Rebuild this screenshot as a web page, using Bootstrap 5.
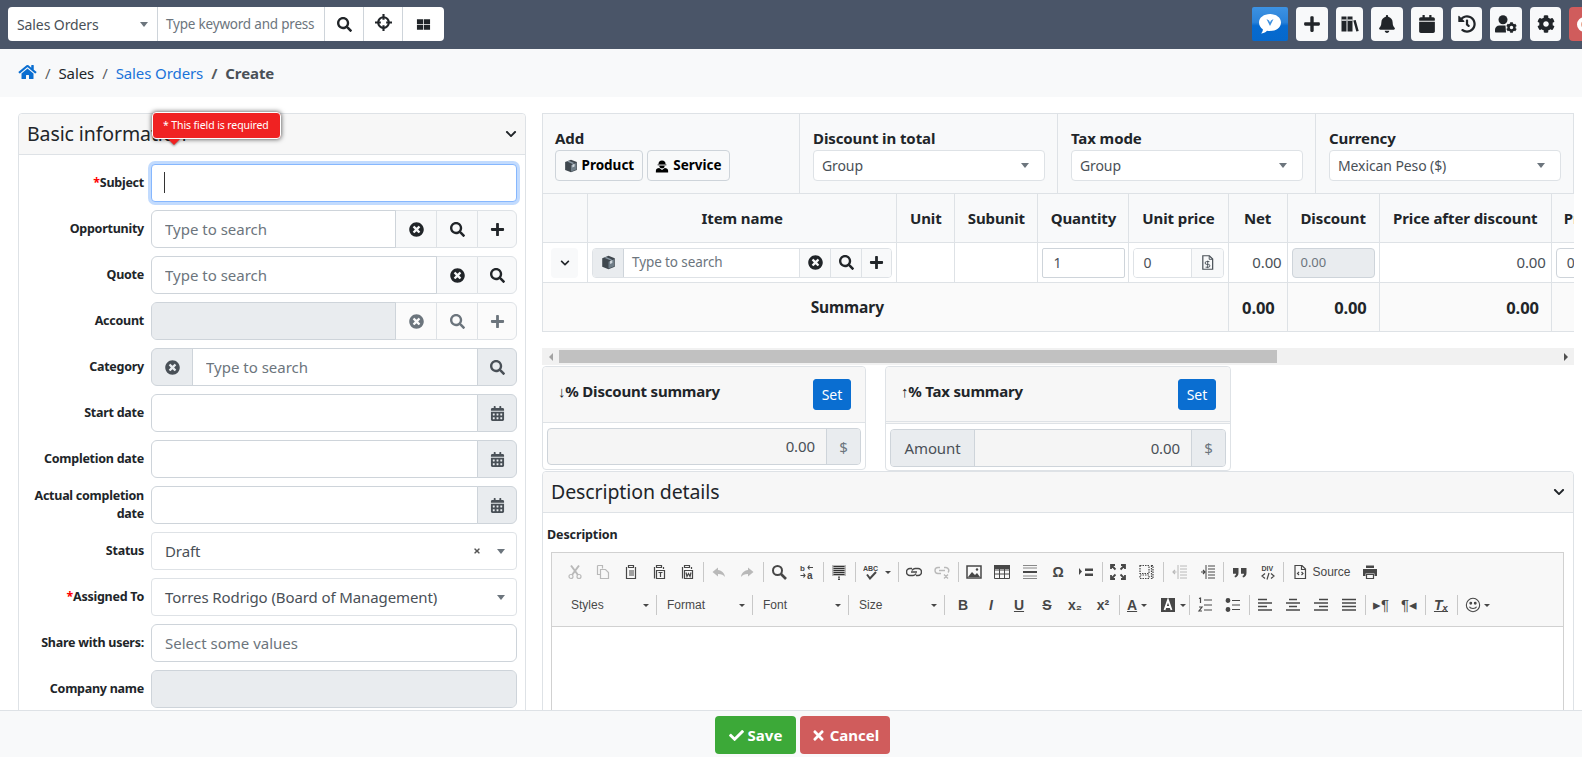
<!DOCTYPE html>
<html lang="en"><head><meta charset="utf-8"><title>Sales Orders - Create</title>
<link href="https://cdn.jsdelivr.net/npm/bootstrap@5.3.0/dist/css/bootstrap.min.css" rel="stylesheet">
<style>
html,body{height:757px;overflow:hidden;background:#fff}
body{font-family:"Noto Sans","Open Sans",sans-serif;font-size:15px;color:#212529;letter-spacing:-.1px}
.fa{width:1em;height:1em;fill:currentColor;display:inline-block;flex:none}
.sym{display:none}
.topbar{height:49px;background:#4a5568;padding:7px 0 0 8px;overflow:hidden;gap:8px}
.searchbox{width:436px;height:34px;background:#fff;border-radius:4px;font-size:14px;color:#495057;overflow:hidden}
.sb-sel{width:150px;border-right:1px solid #ced4da;padding:0 9px}
.sb-inp{width:167px;border-right:1px solid #ced4da;padding:0 8px;color:#6c757d;white-space:nowrap;overflow:hidden;font-size:13.5px;letter-spacing:-.2px}
.sb-btn{width:39px;border-right:1px solid #ced4da;font-size:15px;color:#212529}
.sb-btn:last-child{border:0;width:41px}
.sb-btn .fa.cross{width:17px;height:17px;margin-top:-3px}
.caret{width:0;height:0;border:4px solid transparent;border-top:5px solid #6c757d;border-bottom:0;flex:none}
.tools{margin-right:-20px;gap:8px}
.tb{height:34px;width:32px;background:#f8f9fa;border-radius:4px;font-size:18px;color:#212529}
.tb.w27{width:27px}.tb.w31{width:31px}
.tb .fa.ucog{width:22px}
.tb.chat{width:36px;background:linear-gradient(#3d92e2 0,#2a82d9 45%,#066ad0 55%,#0568cc 100%);border-radius:2px}
.tb.chat svg{width:24px;height:22px}
.tb.red{background:#d05c5c;width:33px;justify-content:flex-start!important;padding-left:8px}
.redring{width:15px;height:15px;border-radius:50%;border:4px solid #fff;flex:none;background:#e9a58f}
.crumbs{height:48px;background:#f8f9fa;padding:0 18px;font-size:15px}
.crumbs .breadcrumb{margin:0;--bs-breadcrumb-item-padding-x:8px}
.crumbs a{text-decoration:none;color:#1a73d9}
.crumbs .breadcrumb-item.active{font-weight:700;color:#495057}
.crumbs .fa{width:19px;height:16px;color:#0a6ed1;vertical-align:-1px}
.pagebody{padding:16px 8px 0 18px;gap:16px}
.leftcol{width:508px;flex:none;position:relative}
.rightcol{width:1032px;flex:none}
.panel{border:1px solid #dee2e6;border-radius:4px;background:#fff}
.panel-h{height:41px;background:#f7f7f7;border-bottom:1px solid #dee2e6;padding:0 8px;font-size:19.5px;border-radius:4px 4px 0 0}
.panel-h .fa{font-size:12px}
.formbody{padding:9px 8px 0 0}
.frow{height:38px;margin-bottom:8px;gap:7px}
.flabel{width:125px;flex:none;text-align:right;font-weight:700;font-size:12.5px;line-height:18px;letter-spacing:-.25px}
.req{color:#f00}
.fctl{width:366px;flex:none;position:relative}
.fctl .form-control,.fctl .input-group-text{height:38px;font-size:15px;border-color:#ced4da}
.fctl .form-control{padding-left:13px;color:#495057}
.form-control::placeholder{color:#6c757d}
.igbtn{width:42px;justify-content:center;background:#f8f9fa;font-size:16px;color:#212529;padding:0;border-color:#dee2e6!important}
.igbtn:last-child{width:40px}
.igbtn.off{color:#6c757d;background:#fbfbfb}
.igbtn.grey{background:#e9ecef;color:#495057;border-color:#ced4da!important}
.fsel{height:38px;border:1px solid #dee2e6;border-radius:4px;background:#fff;color:#495057;padding:0 11px 0 13px;font-size:15px}
.fsel .fa{font-size:8px;color:#555}
.focusfield{border:1px solid #86b7fe;border-radius:4px;height:38px;box-shadow:0 0 0 3px rgba(13,110,253,.25);background:#fff}
.cursor{position:absolute;left:13px;top:8px;height:21px;width:1px;background:#333}
.reqtip{position:absolute;left:134px;top:-1px;width:129px;height:27px;background:#f02222;border:1px solid #fff;border-radius:4px;box-shadow:0 0 5px rgba(0,0,0,.75);color:#fff;font-size:10.5px;z-index:5;padding-left:10px;letter-spacing:-.1px;white-space:nowrap}
.reqtip::after{content:"";position:absolute;left:15px;bottom:-7px;border:6px solid transparent;border-top:6px solid #f02222;border-bottom:0;filter:drop-shadow(0 1px 1px rgba(0,0,0,.5))}
.topcfg{height:80px;background:#f8f9fa;border:1px solid #dee2e6;border-bottom:0}
.cfgcell{flex:1 1 0;padding:13px 12px 0 13px;border-right:1px solid #dee2e6;font-weight:700;font-size:15px;line-height:23px}
.cfgcell:first-child{padding-left:12px}
.cfgcell:last-child{border-right:0}
.cfgbtn{height:31px;border:1px solid #ced4da;border-radius:4px;background:#f8f9fa;font-size:13.5px;font-weight:700;padding:0 7.5px;gap:4px;line-height:1}
.cfgbtn .fa{font-size:14px}
.cfgsel{height:31px;background:#fff;border:1px solid #dee2e6;border-radius:4px;font-weight:400;font-size:14px;color:#495057;padding:0 15px 0 8px}
.tablewrap{overflow:hidden}
.itemtable{table-layout:fixed;width:1110px;margin:0;border-collapse:collapse;font-size:15px}
.itemtable th,.itemtable td{border:1px solid #dee2e6;padding:0;vertical-align:middle}
.itemtable thead th{height:49px;background:#f8f9fa;text-align:center;font-weight:700;font-size:15px;white-space:nowrap;overflow:hidden}
.itemtable thead th.lastcol{text-align:left;padding-left:12px}
.itemtable tbody td{height:40px}
.itemtable tfoot td{height:49px;background:#fafafa;font-weight:700;font-size:16.5px;text-align:right;padding:2px 12px 0 0}
.itemtable tfoot td.sumlabel{text-align:center;padding-right:76px;font-size:15.5px}
.c1{width:45px}.c2{width:309px}.c3{width:58px}.c4{width:83px}.c5{width:91px}.c6{width:99px}.c7{width:59px}.c8{width:92px}.c9{width:172px}.c10{width:100px}
.expander{width:27px;height:30px;background:#f8f9fa;border-radius:4px;margin-left:8px;font-size:10px}
.minig{height:30px;border:1px solid #dee2e6;border-radius:4px;margin:0 4px;overflow:hidden;font-size:13.5px;background:#fff}
.minig>span{border-right:1px solid #dee2e6;width:31px;background:#f8f9fa;font-size:15px;flex:none}
.minig>span:last-child{border-right:0;width:29px}
.minig>span.boxic{background:#e9ecef;border-color:#ced4da}
.minig .mi{flex:1 1 0;padding-left:8px;color:#6c757d;border-right:1px solid #dee2e6}
.numbox{height:30px;border:1px solid #ced4da;border-radius:4px;background:#fff;margin:0 4px;font-size:14px;color:#495057;padding-left:10px}
.numbox.sq{border-radius:2px;margin:0 3px 0 4px;padding-left:10px}
.pricebox{height:30px;margin:0 4px;border:1px solid #dee2e6;border-radius:4px;font-size:14px;color:#495057;overflow:hidden}
.pricebox>b{flex:1 1 0;font-weight:400;padding-left:9px;background:#fff;border-right:1px solid #dee2e6;line-height:28px}
.pricebox>span{width:31px;background:#f8f9fa;font-size:15px}
.discbox{height:30px;margin:0 4px;background:#e9ecef;border:1px solid #ced4da;border-radius:4px;font-size:13px;color:#6c757d;padding-left:8px}
.numcell{text-align:right;padding-right:5px!important;font-size:15px;color:#495057}
.hscroll{height:17px;margin-top:16px;background:#f1f1f1;padding:2px 0}
.hthumb{width:718px;background:#c1c1c1}
.harrow{width:17px}
.tri-l,.tri-r{width:0;height:0;border:4px solid transparent}
.tri-l{border-right:4px solid #a3a3a3;border-left:0}
.tri-r{border-left:4px solid #505050;border-right:0}
.sumrow{gap:19px;align-items:flex-start;margin-top:1px}
.sumcard{border:1px solid #dee2e6;border-radius:4px;background:#fff;width:324px;height:104px}
.sumcard.tax{width:346px;height:105px}
.sumhead{height:56px;background:#f7f7f7;border-bottom:1px solid #dee2e6;padding:0 14px 0 15px;font-weight:700;font-size:15px;border-radius:4px 4px 0 0}
.sumcard.tax .sumhead{border-bottom:3px double #dee2e6;height:57px}
.sumhead>span{margin-top:-6px;letter-spacing:-.2px}
.setbtn{width:38px;height:31px;background:#0a6ed1;border-color:#0a6ed1;border-radius:3px;font-size:14px;padding:0;color:#fff}
.sumgrp{height:37px;margin:5px 4px 0;border:1px solid #ced4da;border-radius:4px;background:#f5f5f5;font-size:15px;color:#495057;overflow:hidden}
.sumcard.tax .sumgrp{height:38px}
.sumgrp .val{flex:1 1 0;text-align:right;padding-right:11px}
.sumgrp .add{background:#e9ecef;border-left:1px solid #ced4da;width:34px;text-align:center;line-height:36px;color:#6c757d}
.sumgrp .pre{background:#e9ecef;border-right:1px solid #ced4da;width:84px;text-align:center;line-height:36px}
.desccard{height:300px}
.desccard .panel-h{padding:0 8px}
.desclabel{font-weight:700;font-size:12.5px;line-height:16px;padding:14px 0 9px 4px}
.cke{margin:0 9px 0 8px;border:1px solid #d1d1d1;height:200px;font-family:"Liberation Sans",sans-serif;letter-spacing:0}
.cketb{background:#f8f8f8;border-bottom:1px solid #d1d1d1;height:74px;padding:5px 0 0 9px}
.ckrow{height:28px;margin-bottom:5px;color:#474747}
.kb{width:28px;height:28px;flex:none}
.kb svg{width:16px;height:16px;fill:none;stroke:currentColor;stroke-width:1.2}
.kb svg text{stroke:none;fill:currentColor;font-family:"Liberation Sans",sans-serif;font-weight:700}
.kb.off{opacity:.35}
.kb.wide{width:39px;justify-content:flex-start!important;padding-left:6px;gap:6px}
.kb.a{width:33px;justify-content:flex-start!important;padding-left:6px;gap:4px}
.kb.sm{width:32px;justify-content:flex-start!important;padding-left:6px;gap:3px}
.kb.src{width:70px;justify-content:flex-start!important;padding-left:6px;gap:5px;font-size:12px}
.kcaret{width:0;height:0;border:3px solid transparent;border-top:3px solid #474747;border-bottom:0;flex:none}
.ksep{width:1px;height:20px;background:#c8c8c8;margin:0 1.5px;flex:none}
.ksep.m3{margin-left:3px}
.kcombo{width:96px;height:20px;border-right:1px solid #c8c8c8;padding:0 7px 0 2px;font-size:12px;color:#484848;flex:none}
.ktxt{font-weight:700;font-size:14px}
.savebar{height:47px;background:#f8f9fa;border-top:1px solid #dee2e6;padding:5px 0 0 23px;gap:4px;z-index:10}
.actbtn{height:38px;color:#fff;font-weight:700;font-size:15px;border-radius:4px;border:0;padding:0;gap:4px}
.actbtn .fa{font-size:15px}
.act-save{width:81px;background:#3ca938}
.act-cancel{width:90px;background:#d05c5c}
.act-save:hover{background:#3ca938;color:#fff}.act-cancel:hover{background:#d05c5c;color:#fff}
</style></head>
<body>
<svg class="sym" aria-hidden="true">
<symbol id="i-search" viewBox="0 0 512 512"><path d="M505 442.7L405.3 343c-4.5-4.5-10.6-7-17-7H372c27.6-35.3 44-79.7 44-128C416 93.1 322.9 0 208 0S0 93.1 0 208s93.1 208 208 208c48.3 0 92.7-16.4 128-44v16.3c0 6.4 2.5 12.5 7 17l99.7 99.7c9.4 9.4 24.6 9.4 33.9 0l28.3-28.3c9.4-9.4 9.4-24.6.1-34zM208 336c-70.7 0-128-57.2-128-128 0-70.7 57.2-128 128-128 70.7 0 128 57.2 128 128 0 70.7-57.2 128-128 128z"/></symbol>
<symbol id="i-plus" viewBox="0 0 448 512"><path d="M416 208H272V64c0-17.67-14.33-32-32-32h-32c-17.67 0-32 14.33-32 32v144H32c-17.67 0-32 14.33-32 32v32c0 17.67 14.33 32 32 32h144v144c0 17.67 14.33 32 32 32h32c17.67 0 32-14.33 32-32V304h144c17.67 0 32-14.33 32-32v-32c0-17.67-14.33-32-32-32z"/></symbol>
<symbol id="i-xc" viewBox="0 0 512 512"><path d="M256 8C119 8 8 119 8 256s111 248 248 248 248-111 248-248S393 8 256 8zm121.6 313.1c4.7 4.7 4.7 12.3 0 17L338 377.6c-4.7 4.7-12.3 4.7-17 0L256 312l-65.1 65.6c-4.7 4.7-12.3 4.7-17 0L134.4 338c-4.7-4.7-4.7-12.3 0-17l65.6-65-65.6-65.1c-4.7-4.7-4.7-12.3 0-17l39.6-39.6c4.7-4.7 12.3-4.7 17 0l65 65.7 65.1-65.6c4.7-4.7 12.3-4.7 17 0l39.6 39.6c4.7 4.7 4.7 12.3 0 17L312 256l65.6 65.1z"/></symbol>
<symbol id="i-calalt" viewBox="0 0 448 512"><path d="M0 464c0 26.5 21.5 48 48 48h352c26.5 0 48-21.5 48-48V192H0v272zm320-196c0-6.6 5.4-12 12-12h40c6.6 0 12 5.4 12 12v40c0 6.6-5.4 12-12 12h-40c-6.6 0-12-5.4-12-12v-40zm0 128c0-6.6 5.4-12 12-12h40c6.6 0 12 5.4 12 12v40c0 6.6-5.4 12-12 12h-40c-6.6 0-12-5.4-12-12v-40zM192 268c0-6.6 5.4-12 12-12h40c6.6 0 12 5.4 12 12v40c0 6.6-5.4 12-12 12h-40c-6.6 0-12-5.4-12-12v-40zm0 128c0-6.6 5.4-12 12-12h40c6.6 0 12 5.4 12 12v40c0 6.6-5.4 12-12 12h-40c-6.6 0-12-5.4-12-12v-40zM64 268c0-6.6 5.4-12 12-12h40c6.6 0 12 5.4 12 12v40c0 6.6-5.4 12-12 12H76c-6.6 0-12-5.4-12-12v-40zm0 128c0-6.6 5.4-12 12-12h40c6.6 0 12 5.4 12 12v40c0 6.6-5.4 12-12 12H76c-6.6 0-12-5.4-12-12v-40zM400 64h-48V16c0-8.8-7.2-16-16-16h-32c-8.8 0-16 7.2-16 16v48H160V16c0-8.8-7.2-16-16-16h-32c-8.8 0-16 7.2-16 16v48H48C21.5 64 0 85.5 0 112v48h448v-48c0-26.5-21.5-48-48-48z"/></symbol>
<symbol id="i-cal" viewBox="0 0 448 512"><path d="M12 192h424c6.6 0 12 5.4 12 12v260c0 26.5-21.5 48-48 48H48c-26.5 0-48-21.5-48-48V204c0-6.6 5.4-12 12-12zm436-44v-36c0-26.5-21.5-48-48-48h-48V12c0-6.6-5.4-12-12-12h-40c-6.6 0-12 5.4-12 12v52H160V12c0-6.6-5.4-12-12-12h-40c-6.6 0-12 5.4-12 12v52H48C21.5 64 0 85.5 0 112v36c0 6.6 5.4 12 12 12h424c6.6 0 12-5.4 12-12z"/></symbol>
<symbol id="i-bell" viewBox="0 0 448 512"><path d="M224 512c35.32 0 63.97-28.65 63.97-64H160.03c0 35.35 28.65 64 63.97 64zm215.39-149.71c-19.32-20.76-55.47-51.99-55.47-154.29 0-77.7-54.48-139.9-127.94-155.16V32c0-17.67-14.32-32-31.98-32s-31.98 14.33-31.98 32v20.84C118.56 68.1 64.08 130.3 64.08 208c0 102.3-36.15 133.53-55.47 154.29-6 6.45-8.66 14.16-8.61 21.71.11 16.4 12.98 32 32.1 32h383.8c19.12 0 32-15.6 32.1-32 .05-7.55-2.61-15.27-8.61-21.71z"/></symbol>
<symbol id="i-hist" viewBox="0 0 512 512"><path d="M504 255.531c.253 136.64-111.18 248.372-247.82 248.468-59.015.042-113.223-20.53-155.822-54.911-11.077-8.94-11.905-25.541-1.839-35.607l11.267-11.267c8.609-8.609 22.353-9.551 31.891-1.984C173.062 425.135 212.781 440 256 440c101.705 0 184-82.311 184-184 0-101.705-82.311-184-184-184-48.814 0-93.149 18.969-126.068 49.932l50.754 50.754c10.08 10.08 2.941 27.314-11.313 27.314H24c-8.837 0-16-7.163-16-16V38.627c0-14.254 17.234-21.393 27.314-11.314l49.372 49.372C129.209 34.136 189.552 8 256 8c136.81 0 247.747 110.78 248 247.531zm-180.912 78.784l9.823-12.63c8.138-10.463 6.253-25.542-4.21-33.679L288 256.349V152c0-13.255-10.745-24-24-24h-16c-13.255 0-24 10.745-24 24v135.651l65.409 50.874c10.463 8.137 25.541 6.253 33.679-4.21z"/></symbol>
<symbol id="i-cog" viewBox="0 0 512 512"><path d="M487.4 315.7l-42.6-24.6c4.3-23.2 4.3-47 0-70.2l42.6-24.6c4.9-2.8 7.1-8.6 5.5-14-11.1-35.6-30-67.8-54.7-94.6-3.8-4.1-10-5.1-14.8-2.3L380.8 110c-17.9-15.4-38.5-27.3-60.8-35.1V25.8c0-5.6-3.9-10.5-9.4-11.7-36.7-8.2-74.3-7.8-109.2 0-5.5 1.2-9.4 6.1-9.4 11.7V75c-22.2 7.9-42.8 19.8-60.8 35.1L88.7 85.5c-4.9-2.8-11-1.9-14.8 2.3-24.7 26.7-43.6 58.9-54.7 94.6-1.7 5.4.6 11.2 5.5 14L67.3 221c-4.3 23.2-4.3 47 0 70.2l-42.6 24.6c-4.9 2.8-7.1 8.6-5.5 14 11.1 35.6 30 67.8 54.7 94.6 3.8 4.1 10 5.1 14.8 2.3l42.6-24.6c17.9 15.4 38.5 27.3 60.8 35.1v49.2c0 5.6 3.9 10.5 9.4 11.7 36.7 8.2 74.3 7.8 109.2 0 5.5-1.2 9.4-6.1 9.4-11.7v-49.2c22.2-7.9 42.8-19.8 60.8-35.1l42.6 24.6c4.9 2.8 11 1.9 14.8-2.3 24.7-26.7 43.6-58.9 54.7-94.6 1.5-5.5-.7-11.3-5.6-14.1zM256 336c-44.1 0-80-35.9-80-80s35.9-80 80-80 80 35.9 80 80-35.9 80-80 80z"/></symbol>
<symbol id="i-home" viewBox="0 0 576 512"><path d="M280.37 148.26L96 300.11V464a16 16 0 0 0 16 16l112.06-.29a16 16 0 0 0 15.92-16V368a16 16 0 0 1 16-16h64a16 16 0 0 1 16 16v95.64a16 16 0 0 0 16 16.05L464 480a16 16 0 0 0 16-16V300L295.67 148.26a12.19 12.19 0 0 0-15.3 0zM571.6 251.47L488 182.56V44.05a12 12 0 0 0-12-12h-56a12 12 0 0 0-12 12v72.61L318.47 43a48 48 0 0 0-61 0L4.34 251.47a12 12 0 0 0-1.6 16.9l25.5 31A12 12 0 0 0 45.15 301l235.22-193.74a12.19 12.19 0 0 1 15.3 0L530.9 301a12 12 0 0 0 16.9-1.6l25.5-31a12 12 0 0 0-1.7-16.93z"/></symbol>
<symbol id="i-check" viewBox="0 0 512 512"><path d="M173.898 439.404l-166.4-166.4c-9.997-9.997-9.997-26.206 0-36.204l36.203-36.204c9.997-9.998 26.207-9.998 36.204 0L192 312.69 432.095 72.596c9.997-9.997 26.207-9.997 36.204 0l36.203 36.204c9.997 9.997 9.997 26.206 0 36.204l-294.4 294.401c-9.998 9.997-26.207 9.997-36.204-.001z"/></symbol>
<symbol id="i-times" viewBox="0 0 352 512"><path d="M242.72 256l100.07-100.07c12.28-12.28 12.28-32.19 0-44.48l-22.24-22.24c-12.28-12.28-32.19-12.28-44.48 0L176 189.28 75.93 89.21c-12.28-12.28-32.19-12.28-44.48 0L9.21 111.45c-12.28 12.28-12.28 32.19 0 44.48L109.28 256 9.21 356.07c-12.28 12.28-12.28 32.19 0 44.48l22.24 22.24c12.28 12.28 32.2 12.28 44.48 0L176 322.72l100.07 100.07c12.28 12.28 32.2 12.28 44.48 0l22.24-22.24c12.28-12.28 12.28-32.19 0-44.48L242.72 256z"/></symbol>
<symbol id="i-chev" viewBox="0 0 448 512"><path d="M207.029 381.476L12.686 187.132c-9.373-9.373-9.373-24.569 0-33.941l22.667-22.667c9.357-9.357 24.522-9.375 33.901-.04L224 284.505l154.745-154.021c9.379-9.335 24.544-9.317 33.901.04l22.667 22.667c9.373 9.373 9.373 24.569 0 33.941L240.971 381.476c-9.373 9.372-24.569 9.372-33.942 0z"/></symbol>
<symbol id="i-th" viewBox="0 0 16 16"><path d="M1 2.500h6.600v5.200H1zM8.400 2.500H15v5.200H8.400zM1 8.500h6.600v5.200H1zM8.400 8.500H15v5.200H8.400z"/></symbol>
<symbol id="i-cross" viewBox="0 0 16 16"><path d="M8 2A6 6 0 1 0 8 14A6 6 0 1 0 8 2zm0 2a4 4 0 1 1 0 8a4 4 0 1 1 0-8z" fill-rule="evenodd"/><path d="M7 0h2v5.500H7zM7 10.500h2V16H7zM0 7h5.500v2H0zM10.500 7H16v2h-5.500z"/></symbol>
<symbol id="i-books" viewBox="0 0 18 18"><path d="M.500 1.500h5v15h-5zM6.500 1.500h5v15h-5zM12.300 5.500l2.400-.6 3 11-2.400.6z"/><path d="M.500 4.500h5v1.200h-5zM6.500 4.500h5v1.200h-5z" fill="#f8f9fa"/></symbol>
<symbol id="i-ucog" viewBox="0 0 22 18"><circle cx="8" cy="4.800" r="4.500"/><path d="M1 17.500c-.6 0-1-.4-1-1v-1.700C0 12.300 2 10.500 4.500 10.500h6l.5 7z"/><use href="#i-cog" x="11" y="7" width="11" height="11"/></symbol>
<symbol id="i-box" viewBox="0 0 16 16"><path d="M8 .8L1.300 3.500v9L8 15.200l6.700-2.700v-9z" fill="#3f474e"/><path d="M8 7.200L14 4.500v7.600L8 14.500z" fill="#6f7d87"/><path d="M9.500 6.500l2.600-1.200v3.300l-2.600 1.100z" fill="#cfd6dc"/><path d="M5.500 2l6.300 2.700-2 .9L3.500 2.800z" fill="#8a98a3"/></symbol>
<symbol id="i-worker" viewBox="0 0 16 16"><path d="M4 5.800a4 4 0 0 1 8 0z"/><path d="M3 6.200h10v1H3z"/><path d="M5 7.600h6a3 3 0 0 1-6 0z"/><path d="M1 15.500v-2c0-2 1.700-3.200 3.800-3.200L8 12.600l3.200-2.300c2.100 0 3.800 1.200 3.800 3.200v2z"/></symbol>
<symbol id="i-fdollar" viewBox="0 0 14 16"><path d="M2 .8h7L12.500 4.300v10.900H2z" fill="none" stroke="currentColor" stroke-width="1.300"/><path d="M8.800 1v3.600h3.600" fill="none" stroke="currentColor"/><path d="M9 7H6a1 1 0 0 0 0 3h2a1 1 0 0 1 0 3H5M7.200 6v8" fill="none" stroke="currentColor"/></symbol>
<symbol id="k-cut" viewBox="0 0 16 16"><circle cx="4" cy="12.500" r="2"/><circle cx="12" cy="12.500" r="2"/><path d="M5 11L12 1.500M11 11L4 1.500" stroke-width="2"/></symbol>
<symbol id="k-copy" viewBox="0 0 16 16"><path d="M2.500 1.500h5v3M5.500 5.500h5l3 3v6h-8zM2.500 1.500v9h3"/></symbol>
<symbol id="k-paste" viewBox="0 0 16 16"><path d="M3.500 3v11.500h9V3M5.500 1.500h5v2h-5z"/><path d="M6 7h5M6 9h5M6 11h5"/></symbol>
<symbol id="k-pastet" viewBox="0 0 16 16"><path d="M3.500 3v11.500M12.500 3v2M5.500 1.500h5v2h-5zM5.500 6.500h8v8h-8z"/><path d="M7.500 8.500h4M9.500 8.500v4.500"/></symbol>
<symbol id="k-pastew" viewBox="0 0 16 16"><path d="M3.500 3v11.500M12.500 3v2M5.500 1.500h5v2h-5zM5.500 6.500h8v8h-8z"/><path d="M7 8.500l1 4 1.500-3 1.500 3 1-4"/></symbol>
<symbol id="k-undo" viewBox="0 0 16 16"><path d="M7 3.500L1.500 8 7 12.500V10c3.500 0 5.500 1 7 3-.5-4-3-6.500-7-7z" fill="currentColor" stroke="none"/></symbol>
<symbol id="k-redo" viewBox="0 0 16 16"><path d="M9 3.500L14.500 8 9 12.500V10c-3.500 0-5.500 1-7 3 .5-4 3-6.500 7-7z" fill="currentColor" stroke="none"/></symbol>
<symbol id="k-find" viewBox="0 0 16 16"><circle cx="6.500" cy="6.500" r="4.500" stroke-width="2"/><path d="M10 10l5 5" stroke-width="2.600"/></symbol>
<symbol id="k-all" viewBox="0 0 16 16"><path d="M1 1h14v11H1z" fill="#b9b9b9" stroke="none"/><path d="M2.500 2.500h11M2.500 4.500h11M2.500 6.500h11M2.500 8.500h11M2.500 10.500h11" stroke="#222" stroke-width=".9"/><path d="M7 13h2M8 13v2.500M7 15.500h2" stroke="#222" stroke-width=".8"/></symbol>
<symbol id="k-link" viewBox="0 0 16 16"><path d="M6 4.500H4a3.500 3.500 0 0 0 0 7h3a3.500 3.500 0 0 0 3-2M10 11.500h2a3.500 3.500 0 0 0 0-7H9a3.500 3.500 0 0 0-3 2" stroke-width="1.500"/><path d="M5 8h6" stroke-width="1.500"/></symbol>
<symbol id="k-unlink" viewBox="0 0 16 16"><path d="M6 3.500H4a3 3 0 0 0 0 6h3M10 3.500h2a3 3 0 0 1 2 5M5 6.500h6M10 10.500l4 4M14 10.500l-4 4" stroke-width="1.400"/></symbol>
<symbol id="k-image" viewBox="0 0 16 16"><path d="M1 2h14v12H1z" stroke-width="1.500"/><path d="M2 13l4-5 3 3 2-2 3 4z" fill="currentColor" stroke="none"/><circle cx="11" cy="5.500" r="1.200" fill="currentColor" stroke="none"/></symbol>
<symbol id="k-table" viewBox="0 0 16 16"><path d="M.500 1.500h15v13H.500zM.500 6h15M.500 10h15M5.500 3v11M10.500 3v11" stroke-width="1"/><path d="M.500 1.500h15v3h-15z" fill="currentColor"/></symbol>
<symbol id="k-hr" viewBox="0 0 16 16"><path d="M1 1.500h14M1 4h14M1 12h14M1 14.500h14" stroke="#888"/><path d="M1 8h14" stroke-width="2"/></symbol>
<symbol id="k-page" viewBox="0 0 16 16"><path d="M1 4l3 3.500-3 3.500z" fill="currentColor" stroke="none"/><path d="M7 4.500h8v2.500H7zM7 9.500h8v2.500H7z" fill="currentColor" stroke="none"/></symbol>
<symbol id="k-max" viewBox="0 0 16 16"><path d="M1 1l4.500 4.500M1 5V1h4M15 1l-4.500 4.500M11 1h4v4M1 15l4.500-4.500M1 11v4h4M15 15l-4.500-4.500M11 15h4v-4" stroke-width="1.800"/></symbol>
<symbol id="k-blocks" viewBox="0 0 16 16"><path d="M2 1.500h9v8H2zM2 11h9v3.500H2zM13.500 1.500h1.500v13h-1.500z" stroke-dasharray="1.500 1"/></symbol>
<symbol id="k-out" viewBox="0 0 16 16"><path d="M8 2h7M8 5h7M8 8h7M8 11h7M8 14h7M6 1v14" stroke-width="1"/><path d="M1 8h3.500M3 6l-2 2 2 2"/></symbol>
<symbol id="k-in" viewBox="0 0 16 16"><path d="M8 2h7M8 5h7M8 8h7M8 11h7M8 14h7M6 1v14" stroke-width="1"/><path d="M1 8h3.500M3 6l2 2-2 2"/></symbol>
<symbol id="k-quote" viewBox="0 0 16 16"><path d="M1 4h5.500v5c0 2.500-1.500 4-3.500 4.500L2.500 12c1-.4 1.500-1 1.500-2.200H1zM9 4h5.500v5c0 2.500-1.500 4-3.500 4.500L10.500 12c1-.4 1.500-1 1.500-2.200H9z" fill="currentColor" stroke="none"/></symbol>
<symbol id="k-src" viewBox="0 0 16 16"><path d="M3 1.500h7l3.500 3.500v9.500H3zM9.500 1.500v4h4"/><path d="M7 8l-1.500 1.500L7 11M9.500 8L11 9.500 9.500 11"/></symbol>
<symbol id="k-print" viewBox="0 0 16 16"><path d="M1 5h14v7h-2.500V9.500h-9V12H1zM4 1.500h8V4H4z" fill="currentColor" stroke="none"/><path d="M4.500 10.500h7v4h-7z"/></symbol>
<symbol id="k-ol" viewBox="0 0 16 16"><path d="M7 3h8M7 8h8M7 13h8"/><path d="M2 1.500l1.500-.5v5M2 10h3l-3 4h3"/></symbol>
<symbol id="k-ul" viewBox="0 0 16 16"><path d="M7 3.500h8M7 8h8M7 12.500h8"/><circle cx="3" cy="3.500" r="1.800" fill="currentColor"/><circle cx="3" cy="12.500" r="1.800" fill="currentColor"/></symbol>
<symbol id="k-left" viewBox="0 0 16 16"><path d="M1 2.500h9M1 6h14M1 9.500h9M1 13h14" stroke-width="1.600"/></symbol>
<symbol id="k-center" viewBox="0 0 16 16"><path d="M4 2.500h8M1 6h14M4 9.500h8M1 13h14" stroke-width="1.600"/></symbol>
<symbol id="k-right" viewBox="0 0 16 16"><path d="M6 2.500h9M1 6h14M6 9.500h9M1 13h14" stroke-width="1.600"/></symbol>
<symbol id="k-just" viewBox="0 0 16 16"><path d="M1 2.500h14M1 6h14M1 9.500h14M1 13h14" stroke-width="1.600"/></symbol>
<symbol id="k-smile" viewBox="0 0 18 18"><circle cx="9" cy="9" r="7.500"/><circle cx="6.500" cy="7" r="1" fill="currentColor"/><circle cx="11.500" cy="7" r="1" fill="currentColor"/><path d="M5 11c1 2.500 7 2.500 8 0"/></symbol>
</svg>

<header class="topbar d-flex align-items-start">
  <div class="searchbox d-flex align-items-stretch">
    <div class="sb-sel d-flex align-items-center justify-content-between"><span>Sales Orders</span><i class="caret"></i></div>
    <div class="sb-inp d-flex align-items-center">Type keyword and press</div>
    <div class="sb-btn d-flex align-items-center justify-content-center"><svg class="fa"><use href="#i-search"/></svg></div>
    <div class="sb-btn d-flex align-items-center justify-content-center"><svg class="fa cross"><use href="#i-cross"/></svg></div>
    <div class="sb-btn d-flex align-items-center justify-content-center"><svg class="fa"><use href="#i-th"/></svg></div>
  </div>
  <div class="tools d-flex ms-auto">
    <div class="tb chat d-flex align-items-center justify-content-center"><svg viewBox="0 0 24 22"><path d="M12 1c6 0 11 3.500 11 8.500S18 18 12 18c-1 0-2-.1-3-.3C7.500 19.500 5 20.500 3 20.500c1.200-1.200 2-2.800 1.800-4.300C2.500 14.700 1 12.300 1 9.500 1 4.500 6 1 12 1z" fill="#fff"/><path d="M8.500 6l3.500 7 3.500-7-2.500 1.500L12 9.500l-1-2z" fill="#3b8fe0"/></svg></div>
    <div class="tb d-flex align-items-center justify-content-center"><svg class="fa"><use href="#i-plus"/></svg></div>
    <div class="tb w27 d-flex align-items-center justify-content-center"><svg class="fa"><use href="#i-books"/></svg></div>
    <div class="tb d-flex align-items-center justify-content-center"><svg class="fa"><use href="#i-bell"/></svg></div>
    <div class="tb d-flex align-items-center justify-content-center"><svg class="fa"><use href="#i-cal"/></svg></div>
    <div class="tb w31 d-flex align-items-center justify-content-center"><svg class="fa"><use href="#i-hist"/></svg></div>
    <div class="tb d-flex align-items-center justify-content-center"><svg class="fa ucog"><use href="#i-ucog"/></svg></div>
    <div class="tb w31 d-flex align-items-center justify-content-center"><svg class="fa"><use href="#i-cog"/></svg></div>
    <div class="tb red d-flex align-items-center justify-content-center"><span class="redring"></span></div>
  </div>
</header>

<nav class="crumbs d-flex align-items-center" aria-label="breadcrumb">
  <ol class="breadcrumb">
    <li class="breadcrumb-item"><a href="#"><svg class="fa"><use href="#i-home"/></svg></a></li>
    <li class="breadcrumb-item">Sales</li>
    <li class="breadcrumb-item"><a href="#">Sales Orders</a></li>
    <li class="breadcrumb-item active" aria-current="page">Create</li>
  </ol>
</nav>

<main class="pagebody d-flex align-items-start">
  <section class="leftcol">
    <div class="panel">
      <div class="panel-h d-flex align-items-center justify-content-between"><span>Basic information</span><svg class="fa"><use href="#i-chev"/></svg></div>
      <div class="formbody">
        <div class="frow d-flex align-items-center">
          <label class="flabel"><span class="req">*</span>Subject</label>
          <div class="fctl"><div class="focusfield"></div><span class="cursor"></span></div>
        </div>
        <div class="frow d-flex align-items-center">
          <label class="flabel">Opportunity</label>
          <div class="fctl input-group"><input class="form-control" placeholder="Type to search"><span class="input-group-text igbtn"><svg class="fa"><use href="#i-xc"/></svg></span><span class="input-group-text igbtn"><svg class="fa"><use href="#i-search"/></svg></span><span class="input-group-text igbtn"><svg class="fa"><use href="#i-plus"/></svg></span></div>
        </div>
        <div class="frow d-flex align-items-center">
          <label class="flabel">Quote</label>
          <div class="fctl input-group"><input class="form-control" placeholder="Type to search"><span class="input-group-text igbtn"><svg class="fa"><use href="#i-xc"/></svg></span><span class="input-group-text igbtn"><svg class="fa"><use href="#i-search"/></svg></span></div>
        </div>
        <div class="frow d-flex align-items-center">
          <label class="flabel">Account</label>
          <div class="fctl input-group"><input class="form-control" disabled><span class="input-group-text igbtn off"><svg class="fa"><use href="#i-xc"/></svg></span><span class="input-group-text igbtn off"><svg class="fa"><use href="#i-search"/></svg></span><span class="input-group-text igbtn off"><svg class="fa"><use href="#i-plus"/></svg></span></div>
        </div>
        <div class="frow d-flex align-items-center">
          <label class="flabel">Category</label>
          <div class="fctl input-group"><span class="input-group-text igbtn grey"><svg class="fa"><use href="#i-xc"/></svg></span><input class="form-control" placeholder="Type to search"><span class="input-group-text igbtn grey"><svg class="fa"><use href="#i-search"/></svg></span></div>
        </div>
        <div class="frow d-flex align-items-center">
          <label class="flabel">Start date</label>
          <div class="fctl input-group"><input class="form-control"><span class="input-group-text igbtn grey"><svg class="fa"><use href="#i-calalt"/></svg></span></div>
        </div>
        <div class="frow d-flex align-items-center">
          <label class="flabel">Completion date</label>
          <div class="fctl input-group"><input class="form-control"><span class="input-group-text igbtn grey"><svg class="fa"><use href="#i-calalt"/></svg></span></div>
        </div>
        <div class="frow d-flex align-items-center">
          <label class="flabel">Actual completion date</label>
          <div class="fctl input-group"><input class="form-control"><span class="input-group-text igbtn grey"><svg class="fa"><use href="#i-calalt"/></svg></span></div>
        </div>
        <div class="frow d-flex align-items-center">
          <label class="flabel">Status</label>
          <div class="fctl fsel d-flex align-items-center"><span class="me-auto">Draft</span><svg class="fa me-3"><use href="#i-times"/></svg><i class="caret"></i></div>
        </div>
        <div class="frow d-flex align-items-center">
          <label class="flabel"><span class="req">*</span>Assigned To</label>
          <div class="fctl fsel d-flex align-items-center"><span class="me-auto">Torres Rodrigo (Board of Management)</span><i class="caret"></i></div>
        </div>
        <div class="frow d-flex align-items-center">
          <label class="flabel">Share with users:</label>
          <div class="fctl"><input class="form-control" placeholder="Select some values"></div>
        </div>
        <div class="frow d-flex align-items-center">
          <label class="flabel">Company name</label>
          <div class="fctl"><input class="form-control" disabled></div>
        </div>
      </div>
    </div>
    <div class="reqtip d-flex align-items-center">* This field is required</div>
  </section>

  <section class="rightcol">
    <div class="topcfg d-flex">
      <div class="cfgcell"><div>Add</div><div class="d-flex gap-1">
        <button class="cfgbtn d-flex align-items-center" type="button"><svg class="fa"><use href="#i-box"/></svg>Product</button>
        <button class="cfgbtn d-flex align-items-center" type="button"><svg class="fa"><use href="#i-worker"/></svg>Service</button></div></div>
      <div class="cfgcell"><div>Discount in total</div><div class="cfgsel d-flex align-items-center justify-content-between"><span>Group</span><i class="caret"></i></div></div>
      <div class="cfgcell"><div>Tax mode</div><div class="cfgsel d-flex align-items-center justify-content-between"><span>Group</span><i class="caret"></i></div></div>
      <div class="cfgcell"><div>Currency</div><div class="cfgsel d-flex align-items-center justify-content-between"><span>Mexican Peso ($)</span><i class="caret"></i></div></div>
    </div>
    <div class="tablewrap">
      <table class="itemtable">
        <colgroup><col class="c1"><col class="c2"><col class="c3"><col class="c4"><col class="c5"><col class="c6"><col class="c7"><col class="c8"><col class="c9"><col class="c10"></colgroup>
        <thead><tr><th></th><th>Item name</th><th>Unit</th><th>Subunit</th><th>Quantity</th><th>Unit price</th><th>Net</th><th>Discount</th><th>Price after discount</th><th class="lastcol">Price</th></tr></thead>
        <tbody><tr>
          <td><div class="expander d-flex align-items-center justify-content-center"><svg class="fa"><use href="#i-chev"/></svg></div></td>
          <td><div class="minig d-flex align-items-stretch"><span class="boxic d-flex align-items-center justify-content-center"><svg class="fa"><use href="#i-box"/></svg></span><div class="mi d-flex align-items-center">Type to search</div><span class="d-flex align-items-center justify-content-center"><svg class="fa"><use href="#i-xc"/></svg></span><span class="d-flex align-items-center justify-content-center"><svg class="fa"><use href="#i-search"/></svg></span><span class="d-flex align-items-center justify-content-center"><svg class="fa"><use href="#i-plus"/></svg></span></div></td>
          <td></td><td></td>
          <td><div class="numbox sq d-flex align-items-center">1</div></td>
          <td><div class="pricebox d-flex align-items-stretch"><b>0</b><span class="d-flex align-items-center justify-content-center"><svg class="fa"><use href="#i-fdollar"/></svg></span></div></td>
          <td class="numcell">0.00</td>
          <td><div class="discbox d-flex align-items-center">0.00</div></td>
          <td class="numcell">0.00</td>
          <td><div class="numbox d-flex align-items-center">0</div></td>
        </tr></tbody>
        <tfoot><tr><td colspan="6" class="sumlabel">Summary</td><td>0.00</td><td>0.00</td><td>0.00</td><td></td></tr></tfoot>
      </table>
    </div>
    <div class="hscroll d-flex align-items-stretch">
      <div class="harrow d-flex align-items-center justify-content-center"><i class="tri-l"></i></div>
      <div class="hthumb"></div>
      <div class="flex-grow-1"></div>
      <div class="harrow d-flex align-items-center justify-content-center"><i class="tri-r"></i></div>
    </div>
    <div class="sumrow d-flex">
      <div class="sumcard">
        <div class="sumhead d-flex align-items-center justify-content-between"><span>↓% Discount summary</span><button class="setbtn btn" type="button">Set</button></div>
        <div class="sumgrp d-flex align-items-center"><div class="val">0.00</div><div class="add">$</div></div>
      </div>
      <div class="sumcard tax">
        <div class="sumhead d-flex align-items-center justify-content-between"><span>↑% Tax summary</span><button class="setbtn btn" type="button">Set</button></div>
        <div class="sumgrp d-flex align-items-center"><div class="pre">Amount</div><div class="val">0.00</div><div class="add">$</div></div>
      </div>
    </div>
    <div class="panel desccard">
      <div class="panel-h d-flex align-items-center justify-content-between"><span>Description details</span><svg class="fa"><use href="#i-chev"/></svg></div>
      <div class="desclabel">Description</div>
      <div class="cke">
        <div class="cketb">
          <div class="ckrow d-flex align-items-center">
            <span class="kb off d-flex align-items-center justify-content-center"><svg><use href="#k-cut"/></svg></span>
            <span class="kb off d-flex align-items-center justify-content-center"><svg><use href="#k-copy"/></svg></span>
            <span class="kb d-flex align-items-center justify-content-center"><svg><use href="#k-paste"/></svg></span>
            <span class="kb d-flex align-items-center justify-content-center"><svg><use href="#k-pastet"/></svg></span>
            <span class="kb d-flex align-items-center justify-content-center"><svg><use href="#k-pastew"/></svg></span>
            <i class="ksep"></i>
            <span class="kb off d-flex align-items-center justify-content-center"><svg><use href="#k-undo"/></svg></span>
            <span class="kb off d-flex align-items-center justify-content-center"><svg><use href="#k-redo"/></svg></span>
            <i class="ksep"></i>
            <span class="kb d-flex align-items-center justify-content-center"><svg><use href="#k-find"/></svg></span>
            <span class="kb d-flex align-items-center justify-content-center"><svg viewBox="0 0 16 16"><text x="1" y="7" font-size="8">b</text><text x="8" y="15" font-size="10">a</text><path d="M9 3.500h5M10.500 1.500l-1.500 2 1.500 2M1.500 11.500H6M4.500 9.500l1.500 2-1.500 2"/></svg></span>
            <i class="ksep"></i>
            <span class="kb d-flex align-items-center justify-content-center"><svg><use href="#k-all"/></svg></span>
            <i class="ksep"></i>
            <span class="kb wide d-flex align-items-center"><svg viewBox="0 0 16 16"><text x="0" y="7" font-size="7">ABC</text><path d="M4 10.500l3 4 6-6.500" stroke-width="2"/></svg><i class="kcaret"></i></span>
            <i class="ksep"></i>
            <span class="kb d-flex align-items-center justify-content-center"><svg><use href="#k-link"/></svg></span>
            <span class="kb off d-flex align-items-center justify-content-center"><svg><use href="#k-unlink"/></svg></span>
            <i class="ksep"></i>
            <span class="kb d-flex align-items-center justify-content-center"><svg><use href="#k-image"/></svg></span>
            <span class="kb d-flex align-items-center justify-content-center"><svg><use href="#k-table"/></svg></span>
            <span class="kb d-flex align-items-center justify-content-center"><svg><use href="#k-hr"/></svg></span>
            <span class="kb ktxt d-flex align-items-center justify-content-center">Ω</span>
            <span class="kb d-flex align-items-center justify-content-center"><svg><use href="#k-page"/></svg></span>
            <i class="ksep"></i>
            <span class="kb d-flex align-items-center justify-content-center"><svg><use href="#k-max"/></svg></span>
            <span class="kb d-flex align-items-center justify-content-center"><svg><use href="#k-blocks"/></svg></span>
            <i class="ksep m3"></i>
            <span class="kb off d-flex align-items-center justify-content-center"><svg><use href="#k-out"/></svg></span>
            <span class="kb d-flex align-items-center justify-content-center"><svg><use href="#k-in"/></svg></span>
            <i class="ksep"></i>
            <span class="kb d-flex align-items-center justify-content-center"><svg><use href="#k-quote"/></svg></span>
            <span class="kb d-flex align-items-center justify-content-center"><svg viewBox="0 0 16 16"><text x="1.500" y="7" font-size="7">DIV</text><path d="M5 9.500l-3 2.500 3 2.500M11 9.500l3 2.500-3 2.500M9 9l-2 6.500"/></svg></span>
            <i class="ksep"></i>
            <span class="kb src d-flex align-items-center"><svg><use href="#k-src"/></svg>Source</span>
            <span class="kb d-flex align-items-center justify-content-center"><svg><use href="#k-print"/></svg></span>
          </div>
          <div class="ckrow d-flex align-items-center">
            <span class="kcombo d-flex align-items-center justify-content-between"><span class="ps-1 ms-1">Styles</span><i class="kcaret"></i></span>
            <span class="kcombo d-flex align-items-center justify-content-between"><span class="ps-1 ms-1">Format</span><i class="kcaret"></i></span>
            <span class="kcombo d-flex align-items-center justify-content-between"><span class="ps-1 ms-1">Font</span><i class="kcaret"></i></span>
            <span class="kcombo d-flex align-items-center justify-content-between"><span class="ps-1 ms-1">Size</span><i class="kcaret"></i></span>
            <span class="kb ktxt fw-bold d-flex align-items-center justify-content-center ms-1">B</span>
            <span class="kb ktxt fst-italic d-flex align-items-center justify-content-center">I</span>
            <span class="kb ktxt text-decoration-underline d-flex align-items-center justify-content-center">U</span>
            <span class="kb ktxt text-decoration-line-through d-flex align-items-center justify-content-center">S</span>
            <span class="kb ktxt d-flex align-items-center justify-content-center">x₂</span>
            <span class="kb ktxt d-flex align-items-center justify-content-center">x²</span>
            <i class="ksep"></i>
            <span class="kb a ktxt text-decoration-underline d-flex align-items-center">A<i class="kcaret"></i></span>
            <span class="kb a d-flex align-items-center"><svg viewBox="0 0 16 16"><path d="M1 1h14v14H1z" fill="currentColor" stroke="none"/><path d="M4.500 13L8 3l3.500 10M5.500 10h5" stroke="#fff" stroke-width="1.800"/></svg><i class="kcaret"></i></span>
            <i class="ksep"></i>
            <span class="kb d-flex align-items-center justify-content-center"><svg><use href="#k-ol"/></svg></span>
            <span class="kb d-flex align-items-center justify-content-center"><svg><use href="#k-ul"/></svg></span>
            <i class="ksep"></i>
            <span class="kb d-flex align-items-center justify-content-center"><svg><use href="#k-left"/></svg></span>
            <span class="kb d-flex align-items-center justify-content-center"><svg><use href="#k-center"/></svg></span>
            <span class="kb d-flex align-items-center justify-content-center"><svg><use href="#k-right"/></svg></span>
            <span class="kb d-flex align-items-center justify-content-center"><svg><use href="#k-just"/></svg></span>
            <i class="ksep"></i>
            <span class="kb d-flex align-items-center justify-content-center">▸¶</span>
            <span class="kb d-flex align-items-center justify-content-center">¶◂</span>
            <i class="ksep"></i>
            <span class="kb ktxt fst-italic text-decoration-underline d-flex align-items-center justify-content-center">Tₓ</span>
            <i class="ksep"></i>
            <span class="kb sm d-flex align-items-center"><svg><use href="#k-smile"/></svg><i class="kcaret"></i></span>
          </div>
        </div>
      </div>
    </div>
  </section>
</main>

<footer class="savebar fixed-bottom d-flex justify-content-center align-items-start">
  <button class="btn actbtn act-save d-flex align-items-center justify-content-center" type="button"><svg class="fa"><use href="#i-check"/></svg>Save</button>
  <button class="btn actbtn act-cancel d-flex align-items-center justify-content-center" type="button"><svg class="fa"><use href="#i-times"/></svg>Cancel</button>
</footer>
</body></html>
